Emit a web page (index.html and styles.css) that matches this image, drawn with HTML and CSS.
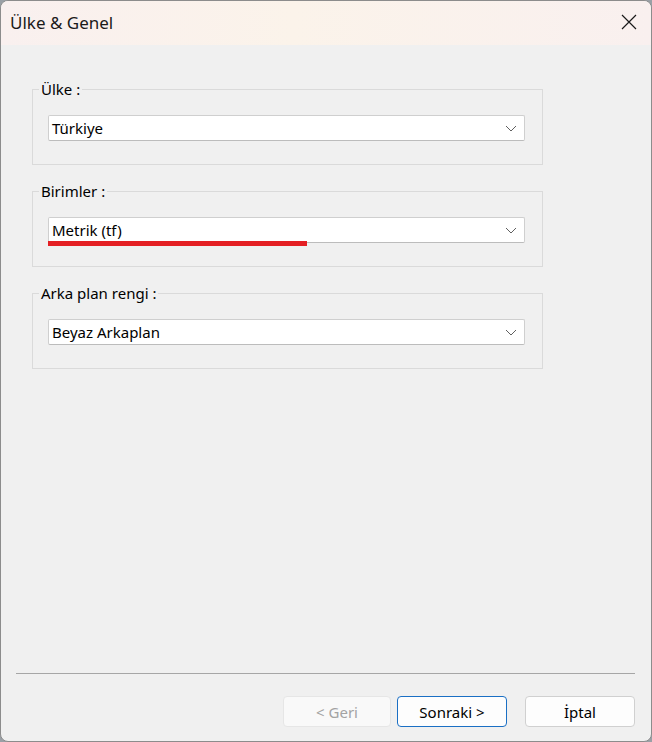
FILE: index.html
```html
<!DOCTYPE html>
<html lang="tr">
<head>
<meta charset="utf-8">
<title>Ülke &amp; Genel</title>
<link rel="stylesheet" href="styles.css">
</head>
<body>
<div class="window">
  <header class="titlebar">
    <span class="title">Ülke &amp; Genel</span>
    <button class="close" aria-label="Kapat">
      <svg width="16" height="16" viewBox="0 0 16 16"><path d="M1 1 L15 15 M15 1 L1 15" stroke="#1a1a1a" stroke-width="1.2" fill="none"/></svg>
    </button>
  </header>
  <main class="content">
    <fieldset class="group">
      <legend class="legend">Ülke :</legend>
      <div class="select"><span class="value">Türkiye</span><svg class="chev" width="12" height="7" viewBox="0 0 12 7"><path d="M1 1 L6 6 L11 1" stroke="#606060" stroke-width="1" fill="none"/></svg></div>
    </fieldset>
    <fieldset class="group">
      <legend class="legend">Birimler :</legend>
      <div class="select"><span class="value">Metrik (tf)</span><svg class="chev" width="12" height="7" viewBox="0 0 12 7"><path d="M1 1 L6 6 L11 1" stroke="#606060" stroke-width="1" fill="none"/></svg><span class="mark"></span></div>
    </fieldset>
    <fieldset class="group">
      <legend class="legend">Arka plan rengi :</legend>
      <div class="select"><span class="value">Beyaz Arkaplan</span><svg class="chev" width="12" height="7" viewBox="0 0 12 7"><path d="M1 1 L6 6 L11 1" stroke="#606060" stroke-width="1" fill="none"/></svg></div>
    </fieldset>
  </main>
  <footer class="footer">
    <div class="sep"></div>
    <div class="buttons">
      <button class="btn disabled">&lt; Geri</button>
      <button class="btn primary">Sonraki &gt;</button>
      <button class="btn cancel">İptal</button>
    </div>
  </footer>
</div>
</body>
</html>
```
FILE: styles.css
```css
* { box-sizing: border-box; }
html, body { margin: 0; padding: 0; }
body {
  width: 652px;
  height: 742px;
  background: #9aa0a6;
  font-family: "Noto Sans", "Open Sans", sans-serif;
  overflow: hidden;
}
.window {
  width: 652px;
  height: 742px;
  background: #f0f0f0;
  border: 1px solid #8c8c8c;
  border-radius: 8px;
  overflow: hidden;
  display: flex;
  flex-direction: column;
}
.titlebar {
  height: 44px;
  flex: none;
  display: flex;
  align-items: center;
  justify-content: space-between;
  padding: 0 14px 0 9px;
  background: linear-gradient(90deg, #f9f0ef 0%, #fbf3ea 45%, #f9f0ef 100%);
}
.title {
  font-size: 17px;
  color: #1a1a1a;
  position: relative;
  top: -1px;
}
.close {
  border: 0;
  background: transparent;
  padding: 0;
  width: 16px;
  height: 16px;
  display: flex;
  position: relative;
  top: -1px;
}
.content {
  flex: 1;
  padding: 34px 0 0 31px;
  display: flex;
  flex-direction: column;
  gap: 16px;
}
.group {
  margin: 0;
  width: 511px;
  height: 86px;
  border: 1px solid #dadada;
  padding: 16px 17px 0 15px;
}
.legend {
  padding: 0 2px;
  margin-left: -9px;
  font-size: 15px;
  line-height: 20px;
  color: #000;
}
.select {
  position: relative;
  height: 26px;
  background: #fff;
  border: 1px solid #cfcfcf;
  border-bottom-color: #bcbcbc;
  border-radius: 2px;
  display: flex;
  align-items: center;
  justify-content: space-between;
  padding: 0 7px 0 3px;
  font-size: 15px;
  color: #000;
}
.chev { flex: none; }
.mark {
  position: absolute;
  left: -1px;
  top: 23px;
  width: 259px;
  height: 5px;
  background: #e41f23;
}
.footer {
  flex: none;
  padding: 0 16px 14px 15px;
}
.sep {
  height: 1px;
  background: #a6a6a6;
  margin-bottom: 22px;
}
.buttons {
  display: flex;
  justify-content: flex-end;
}
.btn {
  width: 110px;
  height: 31px;
  border-radius: 4px;
  font-family: "Noto Sans", "Open Sans", sans-serif;
  font-size: 15px;
  background: #fdfdfd;
  border: 1px solid #d0d0d0;
  color: #000;
  padding: 0;
}
.btn.disabled {
  width: 108px;
  background: #f9f9f9;
  border-color: #e6e6e6;
  color: #a3a3a3;
  margin-right: 6px;
}
.btn.primary {
  border-color: #1a6fc4;
  margin-right: 18px;
}
```
